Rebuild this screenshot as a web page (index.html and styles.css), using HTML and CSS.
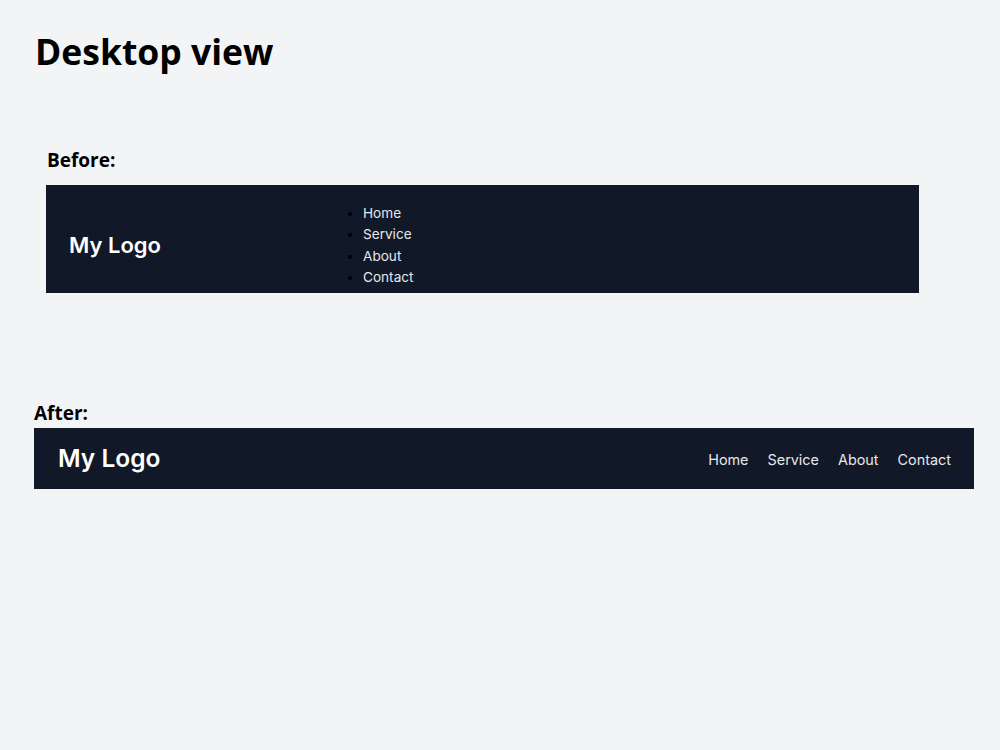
FILE: index.html
```html
<!DOCTYPE html>
<html lang="en">
<head>
<meta charset="utf-8">
<title>Desktop view</title>
<link rel="stylesheet" href="styles.css">
</head>
<body>
  <h1 class="page-title">Desktop view</h1>

  <section class="before">
    <h2 class="label">Before:</h2>
    <nav class="nav-before">
      <div class="logo-before">My Logo</div>
      <ul class="list-before">
        <li><a href="#">Home</a></li>
        <li><a href="#">Service</a></li>
        <li><a href="#">About</a></li>
        <li><a href="#">Contact</a></li>
      </ul>
    </nav>
  </section>

  <section class="after">
    <h2 class="label">After:</h2>
    <nav class="nav-after">
      <div class="logo-after">My Logo</div>
      <ul class="list-after">
        <li><a href="#">Home</a></li>
        <li><a href="#">Service</a></li>
        <li><a href="#">About</a></li>
        <li><a href="#">Contact</a></li>
      </ul>
    </nav>
  </section>
</body>
</html>
```
FILE: styles.css
```css
* { box-sizing: border-box; }

html, body {
  margin: 0;
  background: #f3f4f6;
}

body {
  padding: 30px 26px 0 34px;
  font-family: "Open Sans", "Liberation Sans", sans-serif;
  color: #000;
}

.page-title {
  margin: 0 0 0 1px;
  font-size: 35.5px;
  font-weight: 700;
  line-height: 1.2;
}

.label {
  margin: 0;
  font-size: 19px;
  font-weight: 700;
  line-height: 1.2;
}

.before {
  margin: 76px 0 0 12px;
  width: 873px;
}

.before .label {
  margin: 0 0 14px 1px;
}

.nav-before {
  display: flex;
  align-items: center;
  height: 108px;
  padding: 13px 23px 0;
  background: #111827;
  font-family: Inter, "Noto Sans", sans-serif;
}

.logo-before {
  width: 278px;
  color: #fff;
  font-size: 22px;
  font-weight: 600;
  margin-top: -2px;
}

.list-before {
  margin: 0;
  padding-left: 16px;
  font-size: 13.6px;
  line-height: 21.6px;
  color: #000;
}

.list-before a,
.list-after a {
  color: #e5e7eb;
  text-decoration: none;
}

.after {
  margin-top: 109px;
}

.after .label {
  margin: 0 0 3px 0;
}

.nav-after {
  display: flex;
  align-items: center;
  justify-content: space-between;
  height: 61px;
  padding: 0 23px 0 24px;
  background: #111827;
  font-family: Inter, "Noto Sans", sans-serif;
}

.logo-after {
  color: #fff;
  font-size: 24.5px;
  font-weight: 600;
  padding-bottom: 1px;
}

.list-after {
  display: flex;
  gap: 19px;
  margin: 0;
  padding: 1px 0 0;
  list-style: none;
  font-size: 14.4px;
}
```
